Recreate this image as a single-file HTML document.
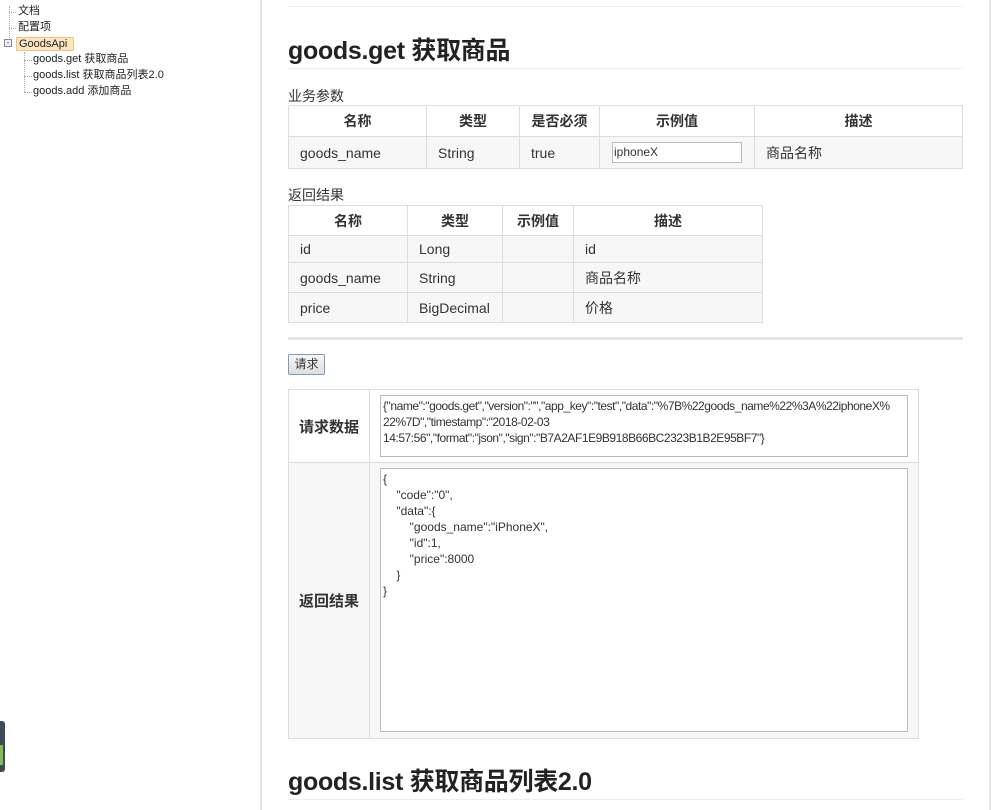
<!DOCTYPE html>
<html><head><meta charset="utf-8">
<style>
*{margin:0;padding:0;box-sizing:border-box}
body{width:1000px;height:810px;overflow:hidden;background:#fff;font-family:"Liberation Sans","Noto Sans CJK SC",sans-serif;color:#333;position:relative}
.a{position:absolute}
.tree{font-size:11px;color:#222;line-height:13px;white-space:nowrap}
.dl{border-left:1px dotted #aaa}
.dh{border-top:1px dotted #aaa}
table{border-collapse:collapse;position:absolute;font-size:14px}
td,th{border:1px solid #ddd;padding:0 11px;white-space:nowrap}
th{font-weight:bold;text-align:center;background:#fff}
tr.g td{background:#f7f7f7}
.ta{position:absolute;border:1px solid #bbb;background:#fff;font-size:12px;line-height:16px;padding:2px 2px;color:#333;overflow:hidden;white-space:pre}
</style></head><body>
<div class="a dl" style="left:9px;top:6px;height:36px"></div>
<div class="a dh" style="left:9px;top:12px;width:7px"></div>
<div class="a dh" style="left:9px;top:28px;width:7px"></div>
<div class="a tree" style="left:18px;top:5px">文档</div>
<div class="a tree" style="left:18px;top:21px">配置项</div>
<div class="a" style="left:4px;top:39px;width:8px;height:8px;border:1px solid #889;background:#eef;font-size:8px;line-height:6px;text-align:center">-</div>
<div class="a tree" style="left:16px;top:37px;width:58px;height:14px;background:#fde6bf;border:1px solid #f6c37c;padding-left:2px">GoodsApi</div>
<div class="a dl" style="left:24px;top:52px;height:40px"></div>
<div class="a dh" style="left:24px;top:60px;width:8px"></div>
<div class="a dh" style="left:24px;top:76px;width:8px"></div>
<div class="a dh" style="left:24px;top:92px;width:8px"></div>
<div class="a tree" style="left:33px;top:53px">goods.get 获取商品</div>
<div class="a tree" style="left:33px;top:69px">goods.list 获取商品列表2.0</div>
<div class="a tree" style="left:33px;top:85px">goods.add 添加商品</div>
<div class="a" style="left:0;top:721px;width:5px;height:51px;background:#3c4a55;border-radius:0 3px 3px 0"></div>
<div class="a" style="left:0;top:745px;width:3px;height:20px;background:#7fbf4a"></div>
<div class="a" style="left:260px;top:0;width:2px;height:810px;background:#e2e2e2"></div>
<div class="a" style="left:989px;top:0;width:2px;height:810px;background:#e8e8e8"></div>
<div class="a" style="left:288px;top:6px;width:675px;height:1px;background:#eee"></div>
<div class="a" style="left:288px;top:31px;font-size:25px;font-weight:bold;color:#222;letter-spacing:-0.3px">goods.get 获取商品</div>
<div class="a" style="left:288px;top:68px;width:675px;height:1px;background:#eee"></div>
<div class="a" style="left:288px;top:86px;font-size:14px">业务参数</div>
<table style="left:288px;top:105px;width:675px">
<tr style="height:31px"><th style="width:138px">名称</th><th style="width:93px">类型</th><th style="width:80px">是否必须</th><th style="width:155px">示例值</th><th>描述</th></tr>
<tr class="g" style="height:32px"><td>goods_name</td><td>String</td><td>true</td><td style="padding-left:12px"><div style="width:130px;height:21px;border:1px solid #bbb;background:#fff;font-size:12px;line-height:19px;padding-left:1px">iphoneX</div></td><td>商品名称</td></tr>
</table>
<div class="a" style="left:288px;top:185px;font-size:14px">返回结果</div>
<table style="left:288px;top:205px;width:475px">
<tr style="height:30px"><th style="width:119px">名称</th><th style="width:95px">类型</th><th style="width:71px">示例值</th><th>描述</th></tr>
<tr class="g" style="height:27px"><td>id</td><td>Long</td><td></td><td>id</td></tr>
<tr class="g" style="height:30px"><td>goods_name</td><td>String</td><td></td><td>商品名称</td></tr>
<tr class="g" style="height:30px"><td>price</td><td>BigDecimal</td><td></td><td>价格</td></tr>
</table>
<div class="a" style="left:288px;top:337px;width:675px;height:3px;background:#e6e6e6"></div>
<div class="a" style="left:288px;top:354px;width:37px;height:21px;border:1px solid #7a9cc8;border-radius:2px;background:linear-gradient(#f6f6f6,#dedede);font-size:12px;line-height:19px;text-align:center">请求</div>
<table style="left:288px;top:389px;width:631px;table-layout:fixed">
<tr style="height:73px"><th style="width:81px;font-size:15px;padding:0">请求数据</th><td></td></tr>
<tr class="g" style="height:276px"><th style="font-size:15px;background:#f7f7f7;padding:0">返回结果</th><td></td></tr>
</table>
<div class="ta" style="left:380px;top:395px;width:528px;height:62px;letter-spacing:-0.45px">{"name":"goods.get","version":"","app_key":"test","data":"%7B%22goods_name%22%3A%22iphoneX%
22%7D","timestamp":"2018-02-03
14:57:56","format":"json","sign":"B7A2AF1E9B918B66BC2323B1B2E95BF7"}</div>
<div class="ta" style="left:380px;top:468px;width:528px;height:264px">{
    "code":"0",
    "data":{
        "goods_name":"iPhoneX",
        "id":1,
        "price":8000
    }
}</div>
<div class="a" style="left:288px;top:762px;font-size:25px;font-weight:bold;color:#222;letter-spacing:-0.3px">goods.list 获取商品列表2.0</div>
<div class="a" style="left:288px;top:799px;width:675px;height:1px;background:#eee"></div>
</body></html>
